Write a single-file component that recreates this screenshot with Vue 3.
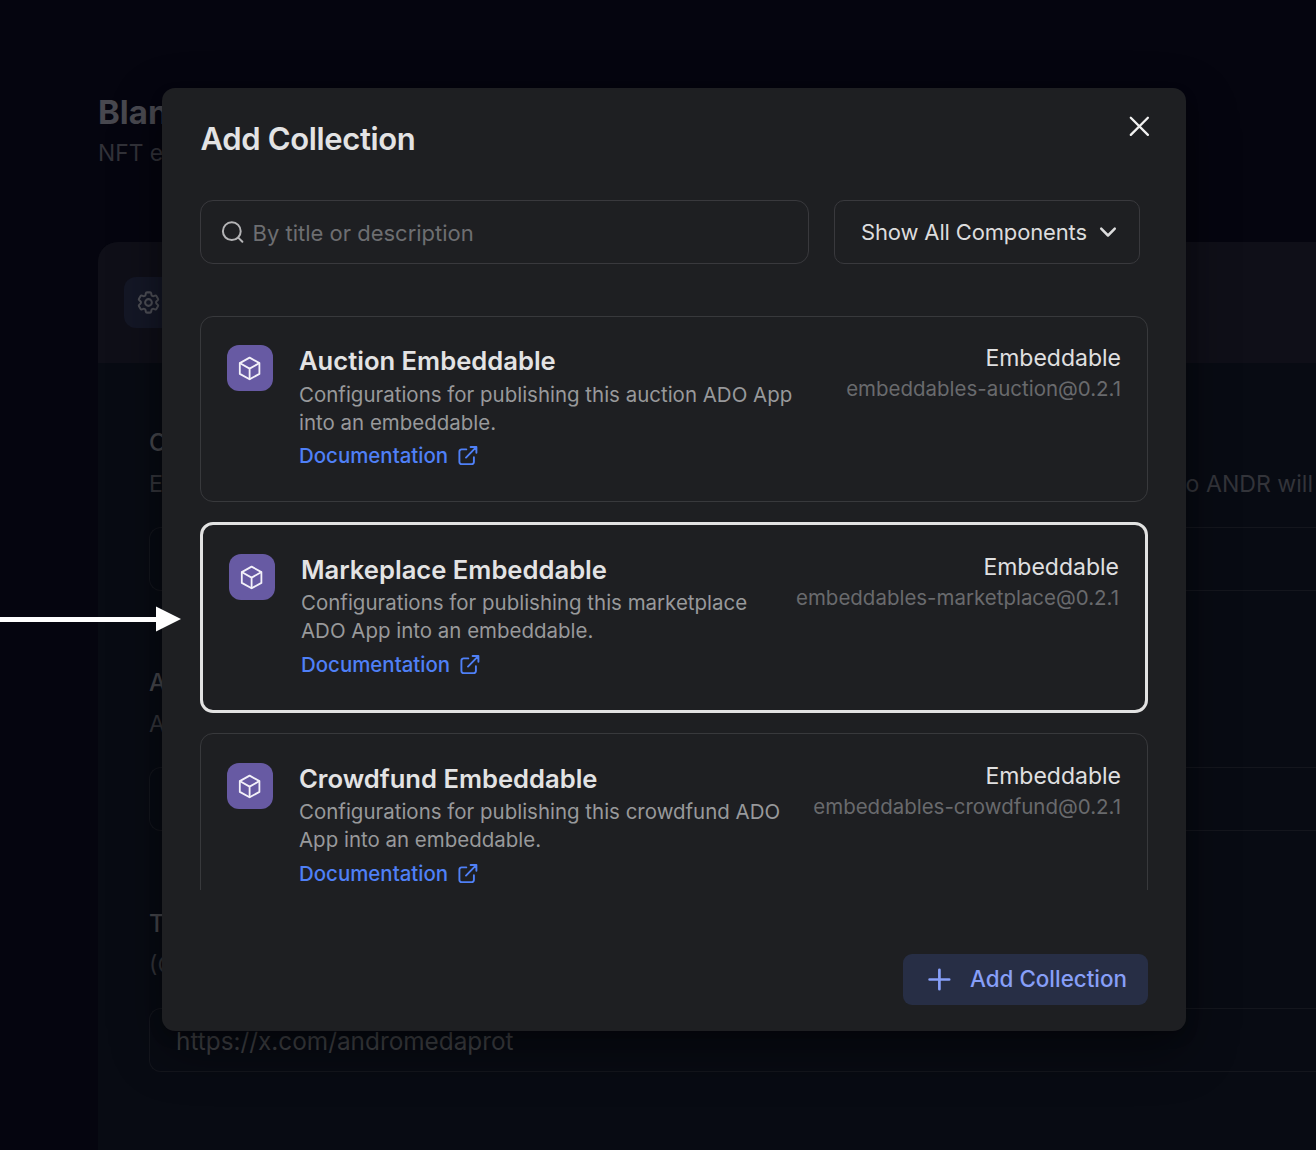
<script setup>
const fields = [
  { label: 'C', before: 'E', after: 'to ANDR will', value: '' },
  { label: 'A', before: 'A', after: '', value: '' },
  { label: 'T', before: '(O', after: '', value: 'https://x.com/andromedaprot' },
]

const embeddables = [
  {
    title: 'Auction Embeddable',
    lines: ['Configurations for publishing this auction ADO App', 'into an embeddable.'],
    version: 'embeddables-auction@0.2.1',
    selected: false,
  },
  {
    title: 'Markeplace Embeddable',
    lines: ['Configurations for publishing this marketplace', 'ADO App into an embeddable.'],
    version: 'embeddables-marketplace@0.2.1',
    selected: true,
  },
  {
    title: 'Crowdfund Embeddable',
    lines: ['Configurations for publishing this crowdfund ADO', 'App into an embeddable.'],
    version: 'embeddables-crowdfund@0.2.1',
    selected: false,
  },
]
</script>

<template>
  <div class="screen">
    <main class="page">
      <h1 class="page-title">Blan</h1>
      <p class="page-sub">NFT e</p>
      <section class="panel">
        <header class="panel-head">
          <span class="gear">
            <svg width="27" height="27" viewBox="0 0 24 24" fill="none" stroke="currentColor" stroke-width="1.8" stroke-linecap="round" stroke-linejoin="round">
              <path d="M9.594 3.94c.09-.542.56-.94 1.11-.94h2.593c.55 0 1.02.398 1.11.94l.213 1.281c.063.374.313.686.645.87.074.04.147.083.22.127.324.196.72.257 1.075.124l1.217-.456a1.125 1.125 0 0 1 1.37.49l1.296 2.247a1.125 1.125 0 0 1-.26 1.431l-1.003.827c-.293.24-.438.613-.431.992a6.759 6.759 0 0 1 0 .255c-.007.378.138.75.43.99l1.005.828c.424.35.534.954.26 1.43l-1.298 2.247a1.125 1.125 0 0 1-1.369.491l-1.217-.456c-.355-.133-.75-.072-1.076.124a6.57 6.57 0 0 1-.22.128c-.331.183-.581.495-.644.869l-.213 1.28c-.09.543-.56.941-1.11.941h-2.594c-.55 0-1.02-.398-1.11-.94l-.213-1.281c-.062-.374-.312-.686-.644-.87a6.52 6.52 0 0 1-.22-.127c-.325-.196-.72-.257-1.076-.124l-1.217.456a1.125 1.125 0 0 1-1.369-.49l-1.297-2.247a1.125 1.125 0 0 1 .26-1.431l1.004-.827c.292-.24.437-.613.43-.992a6.932 6.932 0 0 1 0-.255c.007-.378-.138-.75-.43-.99l-1.004-.828a1.125 1.125 0 0 1-.26-1.43l1.297-2.247a1.125 1.125 0 0 1 1.37-.491l1.216.456c.356.133.751.072 1.076-.124.072-.044.146-.087.22-.128.332-.183.582-.495.644-.869l.214-1.281Z" />
              <circle cx="12" cy="12" r="3" />
            </svg>
          </span>
        </header>
        <div class="panel-body">
          <div v-for="field in fields" :key="field.label" class="field">
            <div class="field-label">{{ field.label }}</div>
            <div class="field-help"><span>{{ field.before }}</span><span>{{ field.after }}</span></div>
            <div class="field-input">{{ field.value }}</div>
          </div>
        </div>
      </section>
    </main>

    <div class="overlay">
      <div class="modal">
        <header class="modal-head">
          <h2>Add Collection</h2>
          <svg class="close" width="22" height="22" viewBox="0 0 22 22" fill="none" stroke="currentColor" stroke-width="2.3" stroke-linecap="round">
            <path d="M2.8 1.8 19.9 18.9M19.9 1.8 2.8 18.9" />
          </svg>
        </header>

        <div class="filters">
          <div class="search">
            <svg width="24" height="24" viewBox="0 0 24 24" fill="none" stroke="currentColor" stroke-width="2" stroke-linecap="round">
              <circle cx="10.8" cy="11.2" r="8.9" />
              <path d="m17.2 17.6 4.2 4.2" />
            </svg>
            <span>By title or description</span>
          </div>
          <div class="select">
            <span>Show All Components</span>
            <svg width="18" height="12" viewBox="0 0 18 12" fill="none" stroke="currentColor" stroke-width="2.5" stroke-linecap="round" stroke-linejoin="round">
              <path d="m2.2 2.6 6.8 6.9 6.8-6.9" />
            </svg>
          </div>
        </div>

        <div class="list">
          <article v-for="item in embeddables" :key="item.title" class="card" :class="{ selected: item.selected }">
            <span class="tile">
              <svg width="26" height="26" viewBox="0 0 26 26" fill="none" stroke="currentColor" stroke-width="1.8" stroke-linecap="round" stroke-linejoin="round">
                <path d="M12.6 2.6 22.4 8.1V18.9L12.6 24.3 2.8 18.9V8.1Z" />
                <path d="M3.1 8.3 12.6 13.6 22.1 8.3M12.6 13.6V24.1" />
              </svg>
            </span>
            <div class="info">
              <h3>{{ item.title }}</h3>
              <p><template v-for="(line, i) in item.lines" :key="i"><br v-if="i" />{{ line }}</template></p>
              <a class="doc">
                <span>Documentation</span>
                <svg width="20" height="20" viewBox="0 0 20 20" fill="none" stroke="currentColor" stroke-width="1.9" stroke-linecap="round" stroke-linejoin="round">
                  <path d="M8.3 3.4H3.6A2.2 2.2 0 0 0 1.4 5.6V15.9A2.2 2.2 0 0 0 3.6 18.1H13.7A2.2 2.2 0 0 0 15.9 15.9V11.3" />
                  <path d="M12.6 1H18.4V6.8M18.2 1.2 8 11.6" />
                </svg>
              </a>
            </div>
            <div class="meta">
              <div class="kind">Embeddable</div>
              <div class="version">{{ item.version }}</div>
            </div>
          </article>
        </div>

        <footer class="modal-foot">
          <button class="add" type="button">
            <svg width="24" height="24" viewBox="0 0 24 24" fill="none" stroke="currentColor" stroke-width="2.7" stroke-linecap="round">
              <path d="M12.4 2.8V22.2M2.6 12.5H22.2" />
            </svg>
            <span>Add Collection</span>
          </button>
        </footer>
      </div>
    </div>

    <svg class="arrow" width="182" height="26" viewBox="0 0 182 26" fill="#fff">
      <path d="M0 11H156V.5L181 13 156 25.5V16H0Z" />
    </svg>
  </div>
</template>

<style>
body {
  margin: 0;
  background: #05050f;
}
</style>

<style scoped>
* {
  box-sizing: border-box;
}
h1, h2, h3, p {
  margin: 0;
}
svg {
  display: block;
  flex: none;
}
.screen {
  position: relative;
  width: 1316px;
  height: 1150px;
  overflow: hidden;
  background: #05050f;
  font-family: Inter, sans-serif;
  white-space: nowrap;
}

.page {
  width: 1316px;
  height: 1150px;
  display: flex;
  flex-direction: column;
  padding: 92px 0 0 98px;
}
.page-title {
  font-size: 33px;
  line-height: 40px;
  font-weight: 700;
  color: #48484f;
}
.page-sub {
  margin-top: 8px;
  font-size: 22.8px;
  line-height: 26px;
  color: #323239;
}
.panel {
  flex: 1;
  margin-top: 76px;
  border-top-left-radius: 20px;
  overflow: hidden;
  background: #080b13;
}
.panel-head {
  height: 121px;
  padding: 35px 26px;
  background: #0f0f18;
}
.gear {
  display: flex;
  align-items: center;
  width: 51px;
  height: 51px;
  padding-left: 11px;
  border-radius: 12px;
  background: #141726;
  color: #4d4e55;
}
.panel-body {
  padding: 65px 0 0 51px;
}
.field {
  height: 240.3px;
}
.field-label {
  font-size: 24px;
  line-height: 29px;
  font-weight: 500;
  color: #45464b;
}
.field-help {
  display: flex;
  justify-content: space-between;
  margin-top: 13px;
  padding-right: 3px;
  font-size: 23.1px;
  line-height: 28px;
  color: #33343a;
}
.field-input {
  height: 64px;
  margin-top: 29px;
  padding-left: 26px;
  border: 1px solid #14161d;
  border-right: 0;
  border-radius: 12px 0 0 12px;
  font-size: 24.35px;
  line-height: 64px;
  color: #3f4044;
}

.overlay {
  position: absolute;
  inset: 0;
  padding: 88px 0 0 162px;
}
.modal {
  display: flex;
  flex-direction: column;
  width: 1024px;
  height: 943px;
  padding: 0 38px 26px;
  border-radius: 13px;
  background: #1e1f22;
  box-shadow: 0 6px 13px rgba(0, 0, 0, 0.2), 0 19px 51px rgba(0, 0, 0, 0.4);
}
.modal-head {
  display: flex;
  justify-content: space-between;
  height: 112px;
  padding: 28px 0 0;
}
.modal-head h2 {
  padding-left: 0.5px;
  font-size: 31px;
  line-height: 46px;
  font-weight: 600;
  letter-spacing: -0.35px;
  color: #e3e3e4;
}
.close {
  margin-right: -2px;
  color: #f1f1f1;
}
.filters {
  display: flex;
  gap: 25px;
}
.search,
.select {
  display: flex;
  align-items: center;
  height: 64px;
  border: 1px solid #39393d;
  border-radius: 13px;
  font-size: 22px;
}
.search {
  width: 609px;
  padding-left: 20px;
  gap: 7.5px;
  color: #6d6e71;
}
.search svg {
  color: #b4b4b6;
}
.search span {
  padding-top: 2px;
}
.select {
  width: 306px;
  justify-content: space-between;
  padding: 0 22px 0 26px;
  border-radius: 10px;
  letter-spacing: -0.15px;
  color: #dcdcdd;
}
.list {
  display: flex;
  flex-direction: column;
  gap: 20px;
  height: 574px;
  margin-top: 52px;
  overflow: hidden;
}
.card {
  display: flex;
  flex: none;
  height: 186px;
  padding: 28px 26px;
  border: 1px solid #38393c;
  border-radius: 13px;
}
.card.selected {
  height: 191px;
  border: 3px solid #e2e2e2;
  padding-top: 29px;
}
.card:last-child {
  padding-top: 29px;
}
.tile {
  display: flex;
  align-items: center;
  justify-content: center;
  width: 46px;
  height: 46px;
  margin-right: 26px;
  border-radius: 12px;
  background: #675aa3;
  color: #f3f1f9;
}
.info {
  flex: 1;
}
.info h3 {
  font-size: 25.6px;
  line-height: 32px;
  font-weight: 600;
  color: #e3e3e4;
}
.info p {
  margin-top: 4px;
  font-size: 20.48px;
  line-height: 28px;
  color: #98999b;
}
.card:not(:first-child) .info p {
  margin-top: 3px;
}
.card:not(:first-child) .doc {
  margin-top: 6px;
}
.doc {
  display: flex;
  align-items: center;
  gap: 9.5px;
  margin-top: 5px;
  font-size: 20.45px;
  line-height: 28px;
  font-weight: 500;
  color: #4f80f7;
}
.meta {
  text-align: right;
}
.kind {
  font-size: 23px;
  line-height: 26px;
  color: #e0e0e1;
}
.version {
  margin-top: 5px;
  font-size: 20.48px;
  line-height: 26px;
  color: #696a6d;
}
.modal-foot {
  display: flex;
  justify-content: flex-end;
  margin-top: auto;
}
.add {
  display: flex;
  align-items: center;
  justify-content: space-between;
  width: 245px;
  height: 51px;
  padding: 0 21px 2px 24px;
  border: 0;
  border-radius: 9px;
  background: #272e45;
  font-family: inherit;
  font-size: 22.4px;
  font-weight: 550;
  color: #879ff8;
}
.arrow {
  position: absolute;
  left: 0;
  top: 606px;
}
</style>
